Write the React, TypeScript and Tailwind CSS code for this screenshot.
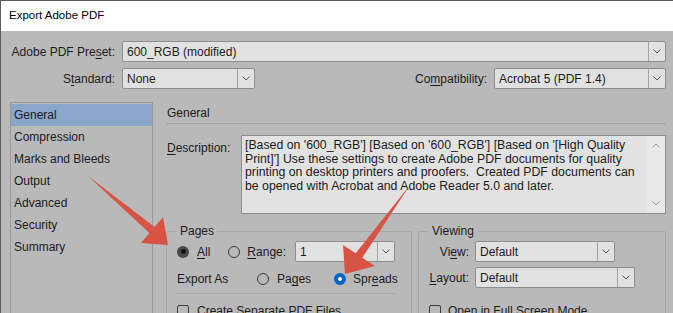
import type { ReactNode } from "react";

const FONT = { fontFamily: '"Liberation Sans", Arial, sans-serif' };

function Chevron() {
  return (
    <svg width="8" height="5" viewBox="0 0 8 5" className="text-[#555]">
      <path d="M0.5 0.5 L4 4 L7.5 0.5" fill="none" stroke="currentColor" strokeWidth="1" />
    </svg>
  );
}

function Dropdown({ value, className }: { value: string; className: string }) {
  return (
    <div
      className={
        "flex h-[21px] shrink-0 items-stretch rounded-[2px] border border-[#8e8e8e] bg-[#e1e1e1] text-[12px] text-[#1b1b1b] " +
        className
      }
    >
      <div className="flex flex-1 items-center pl-[4px] whitespace-nowrap">{value}</div>
      <div className="flex w-[17px] items-center justify-center border-l border-[#a3a3a3]">
        <Chevron />
      </div>
    </div>
  );
}

function Radio({ state, className = "" }: { state: "off" | "gray" | "blue"; className?: string }) {
  if (state === "blue")
    return (
      <span className={"flex h-[12px] w-[12px] shrink-0 items-center justify-center rounded-full bg-[#0563c9] " + className}>
        <span className="block h-[4px] w-[4px] rounded-full bg-white" />
      </span>
    );
  if (state === "gray")
    return (
      <span className={"flex h-[12px] w-[12px] shrink-0 items-center justify-center rounded-full bg-[#4a4a4a] " + className}>
        <span className="block h-[5px] w-[5px] rounded-full bg-[#161616]" />
      </span>
    );
  return <span className={"block h-[12px] w-[12px] shrink-0 rounded-full border border-[#3a3a3a] " + className} />;
}

function Check() {
  return <span className="block h-[12px] w-[12px] shrink-0 rounded-[2px] border border-[#3a3a3a]" />;
}

function U({ children }: { children: ReactNode }) {
  return <span className="underline underline-offset-2">{children}</span>;
}

const sections = ["General", "Compression", "Marks and Bleeds", "Output", "Advanced", "Security", "Summary"];

export default function App() {
  return (
    <div
      className="relative h-[313px] w-[673px] overflow-hidden border-t border-l border-[#5c5c5c] bg-[#b9b9b9] text-[12px] text-[#1b1b1b]"
      style={FONT}
    >
      <div className="flex h-[30px] items-center bg-white pl-[8px] text-[11.5px] text-black">Export Adobe PDF</div>

      <div className="pl-[9px] pr-[7px] pt-[10px]">
        <div className="flex items-center">
          <div className="w-[106px] pr-[1px] text-right">
            Adobe PDF Pre<U>s</U>et:
          </div>
          <Dropdown value="600_RGB (modified)" className="ml-[6px] flex-1" />
        </div>
        <div className="mt-[6px] flex items-center">
          <div className="w-[106px] pr-[1px] text-right">
            S<U>t</U>andard:
          </div>
          <Dropdown value="None" className="ml-[6px] w-[133px]" />
          <div className="ml-auto">
            Co<U>m</U>patibility:
          </div>
          <Dropdown value="Acrobat 5 (PDF 1.4)" className="ml-[7px] w-[172px]" />
        </div>

        <div className="mt-[13px] flex">
          <div className="h-[230px] w-[143px] border border-[#989898] pt-[1px]">
            {sections.map((s, i) => (
              <div
                key={s}
                className={"flex h-[22px] items-center pl-[3px] " + (i === 0 ? "bg-[#8aa7cb]" : "")}
              >
                {s}
              </div>
            ))}
          </div>

          <div className="ml-[13px] flex-1">
            <div className="flex h-[22px] items-center border-b border-[#a2a2a2] pl-[1px]">General</div>
            <div className="mt-[11px] flex">
              <div className="w-[75px] pl-[1px] pt-[4px]">
                <U>D</U>escription:
              </div>
              <div className="flex h-[79px] flex-1 border border-[#8e8e8e] bg-[#e2e2e2]">
                <div className="flex-1 pl-[3px] pt-[3px] text-[12.3px] leading-[13.6px] whitespace-nowrap">
                  [Based on '600_RGB'] [Based on '600_RGB'] [Based on '[High Quality
                  <br />
                  Print]'] Use these settings to create Adobe PDF documents for quality
                  <br />
                  printing on desktop printers and proofers.&nbsp; Created PDF documents can
                  <br />
                  be opened with Acrobat and Adobe Reader 5.0 and later.
                </div>
                <div className="flex w-[18px] flex-col items-center justify-between bg-[#e9e9e9] py-[7px]">
                  <svg width="8" height="5" viewBox="0 0 8 5">
                    <path d="M0.5 4.5 L4 1 L7.5 4.5" fill="none" stroke="#9a9a9a" />
                  </svg>
                  <svg width="8" height="5" viewBox="0 0 8 5">
                    <path d="M0.5 0.5 L4 4 L7.5 0.5" fill="none" stroke="#9a9a9a" />
                  </svg>
                </div>
              </div>
            </div>

            <div className="mt-[10px] flex gap-[6px]">
              <fieldset className="w-[246px] min-w-0 shrink-0 rounded-[2px] border border-[#a6a6a6] pb-[10px] pl-[10px] pr-[10px]">
                <legend className="px-[3px] leading-[14px]">Pages</legend>
                <div className="mt-[3px] flex items-center">
                  <Radio state="gray" />
                  <span className="ml-[8px]">
                    <U>A</U>ll
                  </span>
                  <Radio state="off" className="ml-[18px]" />
                  <span className="ml-[7px]">
                    <U>R</U>ange:
                  </span>
                  <Dropdown value="1" className="ml-[9px] w-[100px]" />
                </div>
                <div className="mt-[8px] flex items-center">
                  <span className="w-[80px]">Export As</span>
                  <Radio state="off" />
                  <span className="ml-[8px]">
                    Pa<U>g</U>es
                  </span>
                  <Radio state="blue" className="ml-[23px]" />
                  <span className="ml-[7px]">
                    Spr<U>e</U>ads
                  </span>
                </div>
                <div className="mt-[5px] mr-[5px] border-t border-[#a9a9a9]" />
                <div className="mt-[10px] flex items-center leading-[14px]">
                  <Check />
                  <span className="ml-[8px] whitespace-nowrap">Create Separate PDF Files</span>
                </div>
              </fieldset>

              <fieldset className="min-w-0 flex-1 rounded-[2px] border border-[#a6a6a6] pb-[10px] pl-[8px]">
                <legend className="ml-[1px] px-[4px] leading-[14px]">Viewing</legend>
                <div className="mt-[3px] flex items-center">
                  <span className="w-[42px] text-right">
                    Vi<U>e</U>w:
                  </span>
                  <Dropdown value="Default" className="ml-[6px] w-[140px]" />
                </div>
                <div className="mt-[5px] flex items-center">
                  <span className="w-[42px] text-right">
                    <U>L</U>ayout:
                  </span>
                  <Dropdown value="Default" className="ml-[6px] w-[160px]" />
                </div>
                <div className="mt-[16px] flex items-center pl-[2px] leading-[14px]">
                  <Check />
                  <span className="ml-[7px] whitespace-nowrap">Open in Full Screen Mode</span>
                </div>
              </fieldset>
            </div>
          </div>
        </div>
      </div>

      <svg className="pointer-events-none absolute left-0 top-0" width="673" height="313">
        <polygon points="87,175 153.6,226 162,216 167,244 140,242 148.4,232" fill="#d75444" />
        <polygon points="409,184 361.3,256.7 374,265 344,273 342,244 354.7,252.3" fill="#d75444" />
      </svg>
    </div>
  );
}
